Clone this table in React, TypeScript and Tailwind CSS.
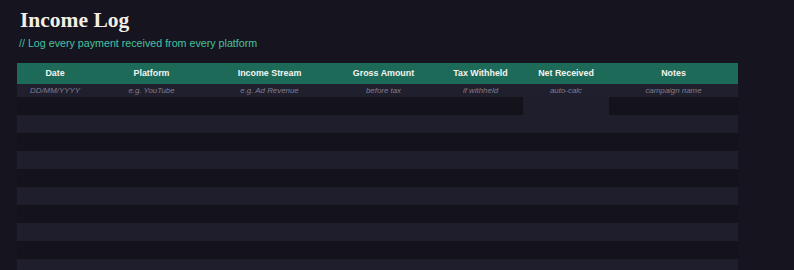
import React from "react";

const cols = [
  { h: "Date", p: "DD/MM/YYYY" },
  { h: "Platform", p: "e.g. YouTube" },
  { h: "Income Stream", p: "e.g. Ad Revenue" },
  { h: "Gross Amount", p: "before tax" },
  { h: "Tax Withheld", p: "if withheld" },
  { h: "Net Received", p: "auto-calc" },
  { h: "Notes", p: "campaign name" },
];

const grid = "grid grid-cols-[76px_117px_119px_109px_85px_86px_129px] w-[721px]";

export default function App() {
  const rows = Array.from({ length: 10 }, (_, i) => i);
  return (
    <div className="w-[794px] h-[270px] overflow-hidden bg-[#16151f] px-[17px] pt-[8px]" style={{ fontFamily: '"Liberation Sans", Arial, sans-serif' }}>
      <h1
        className="pl-[3px] text-[21.5px] leading-[24px] font-bold text-[#f3efe6]"
        style={{ fontFamily: '"Liberation Serif", Georgia, serif' }}
      >
        Income Log
      </h1>
      <p className="mt-[3px] pl-[2px] text-[10.7px] leading-[16px] text-[#48c1a0]">
        // Log every payment received from every platform
      </p>
      <div className="mt-[12px]">
        <div className={`${grid} h-[21px] bg-[#1e6a58]`}>
          {cols.map((c) => (
            <div key={c.h} className="flex items-center justify-center text-[8.9px] font-bold text-[#f4f4f0]">
              {c.h}
            </div>
          ))}
        </div>
        <div className={`${grid} h-[13px] bg-[#201f2d]`}>
          {cols.map((c) => (
            <div key={c.h} className="flex items-center justify-center text-[7.9px] italic text-[#807d90]">
              {c.p}
            </div>
          ))}
        </div>
        {rows.map((i) => (
          <div key={i} className={`${grid} h-[18px] ${i % 2 === 0 ? "bg-[#14131c]" : "bg-[#1f1e2c]"}`}>
            {cols.map((c, j) => (
              <div key={c.h} className={i === 0 && j === 5 ? "bg-[#1f1e2c]" : ""} />
            ))}
          </div>
        ))}
      </div>
    </div>
  );
}
